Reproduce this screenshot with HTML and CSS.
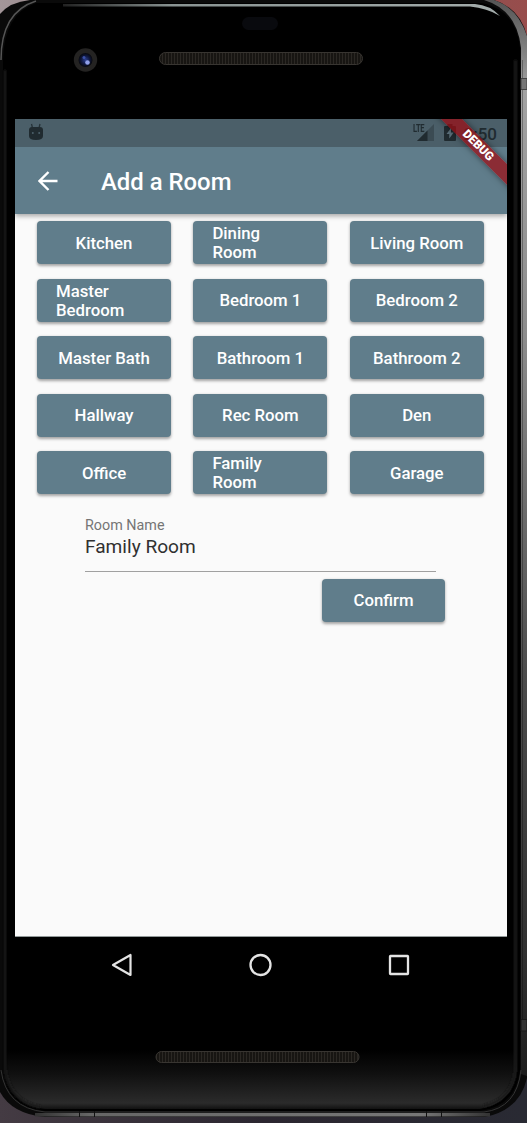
FILE: index.html
```html
<!DOCTYPE html>
<html lang="en">
<head>
<meta charset="utf-8">
<title>Add a Room</title>
<link rel="stylesheet" href="styles.css">
</head>
<body>
<div class="device">
  <svg class="shell" width="527" height="1123" viewBox="0 0 527 1123">
    <defs>
      <linearGradient id="desk" x1="0" y1="0" x2="1" y2="0"><stop offset="0" stop-color="#a39699"/><stop offset=".5" stop-color="#75585a"/><stop offset="1" stop-color="#984d4c"/></linearGradient>
      <linearGradient id="deskLow" x1="0" y1="0" x2="1" y2="0"><stop offset="0" stop-color="#443b43"/><stop offset=".5" stop-color="#2b2630"/><stop offset="1" stop-color="#292a33"/></linearGradient>
      <linearGradient id="chin" x1="0" y1="0" x2="0" y2="1"><stop offset="0" stop-color="#000"/><stop offset=".4" stop-color="#101010"/><stop offset=".9" stop-color="#2b2b2b"/><stop offset="1" stop-color="#121212"/></linearGradient>
      <linearGradient id="side" gradientUnits="userSpaceOnUse" x1="0" y1="0" x2="0" y2="1123"><stop offset="0" stop-color="#555"/><stop offset=".08" stop-color="#a2a2a2"/><stop offset=".3" stop-color="#8c8c8c"/><stop offset=".6" stop-color="#4c4c4c"/><stop offset=".85" stop-color="#303030"/><stop offset="1" stop-color="#151515"/></linearGradient>
      <linearGradient id="shine" x1="0" y1="0" x2="1" y2="0"><stop offset="0" stop-color="#222"/><stop offset=".25" stop-color="#8a9493"/><stop offset="1" stop-color="#a3acab"/></linearGradient>
      <linearGradient id="base" gradientUnits="userSpaceOnUse" x1="35" y1="0" x2="490" y2="0"><stop offset="0" stop-color="#333"/><stop offset=".12" stop-color="#666"/><stop offset=".85" stop-color="#777"/><stop offset="1" stop-color="#333"/></linearGradient>
      <radialGradient id="lens"><stop offset="0" stop-color="#2c3f91"/><stop offset=".6" stop-color="#10183d"/><stop offset="1" stop-color="#07080c"/></radialGradient>
      <pattern id="mesh" width="3" height="2" patternUnits="userSpaceOnUse"><rect width="3" height="2" fill="#171512"/><rect width="1" height="2" fill="#2b2824"/></pattern>
      <filter id="soft" x="-5%" y="-5%" width="110%" height="110%"><feGaussianBlur stdDeviation="1.200"/></filter>
    </defs>
    <rect width="527" height="200" fill="url(#desk)"/>
    <rect y="960" width="527" height="163" fill="url(#deskLow)"/>
    <path d="M0 14Q10 2 30 0H494Q520 8 527 36V1078Q520 1110 485 1117H45Q12 1114 0 1092Z" fill="#0a0a0a"/>
    <path d="M484 0H494Q518 8 527 36V1076L521 1074V48Q517 10 484 0Z" fill="url(#side)"/>
    <path d="M522.500 60V1030" stroke="#000" stroke-opacity=".3"/>
    <path d="M1 60Q1 12 36 1" fill="none" stroke="#555" stroke-width="1.500"/>
    <path d="M1 1070Q6 1108 45 1112H484Q517 1108 521 1070" fill="none" stroke="#333" stroke-width="1"/>
    <path d="M3 60Q4 14 36 3H482Q516 10 520 48V1070Q516 1106 480 1111H45Q7 1107 3 1070Z" fill="#000"/>
    <path d="M6 1050H517V1070Q513 1103 480 1109H45Q10 1105 6 1070Z" fill="url(#chin)"/>
    <path d="M5 70V1070Q10 1102 40 1107M515.500 60V1070Q512 1100 484 1106" fill="none" stroke="#1a1a1a" stroke-width="3" filter="url(#soft)"/>
    <path d="M63 4H475Q490 5 500 16Q487 8 470 6.500H63Z" fill="url(#shine)"/>
    <path d="M35 1114.800H490" stroke="url(#base)" stroke-width="3.500"/>
    <path d="M79.500 1111v6M94.500 1111v6M426.500 1111v6M441.500 1111v6" stroke="#111"/>
    <path d="M521 78.500H527V89.500H521Z" fill="#777" stroke="#444"/>
    <path d="M521 1019.500H527V1031H521Z" fill="#333" stroke="#181818"/>
    <rect x="242" y="17" width="36" height="13" rx="6.500" fill="#090a0e"/>
    <circle cx="85.500" cy="60" r="11.700" fill="#242322"/>
    <circle cx="85.500" cy="60" r="7" fill="url(#lens)"/>
    <circle cx="87.500" cy="62.500" r="2.300" fill="#91a0ea"/><circle cx="84" cy="57.500" r="1.500" fill="#3b51a8"/>
    <g fill="url(#mesh)" stroke="#383531"><rect x="159.500" y="52.500" width="203" height="12" rx="6"/><rect x="156" y="1051.500" width="203" height="11" rx="5.500"/></g>
  </svg>

  <main class="screen">
    <header class="top">
      <div class="status">
        <svg class="droid" width="16" height="18" viewBox="0 0 16 18"><path d="M3.500 1l1 4M12 1l-1 4" stroke="#263238" stroke-width="1.300"/><path d="M1 7Q1 4 4 4H12Q15 4 15 7V13Q15 17 8 17Q1 17 1 13Z" fill="#202b30"/><circle cx="4.800" cy="10" r="1" fill="#4c616b"/><circle cx="11.200" cy="10" r="1" fill="#4c616b"/></svg>
        <div class="signals">
          <span class="lte">LTE</span>
          <svg class="bars" width="17" height="17" viewBox="0 0 17 17"><path d="M17 0V17H0Z" fill="#3b4b53"/><path d="M10.500 6.500V17H0Z" fill="#202b30"/></svg>
          <svg class="battery" width="12" height="17" viewBox="0 0 12 17"><path d="M1 2H3.500V0H8.500V2H11Q12 2 12 3V16Q12 17 11 17H1Q0 17 0 16V3Q0 2 1 2Z" fill="#202b30"/><path d="M7 4L2.500 10H5.300V14.500L9.700 8.500H7Z" fill="#5b707b"/></svg>
          <span class="time">2:50</span>
        </div>
      </div>
      <div class="appbar">
        <svg width="20" height="20" viewBox="0 0 20 20"><path d="M10.500 1L1.500 10L10.500 19M1.500 10H19.500" fill="none" stroke="#fff" stroke-width="2.400"/></svg>
        <h1>Add a Room</h1>
      </div>
    </header>

    <section class="rooms">
      <button><span>Kitchen</span></button><button><span class="wrap">Dining<br>Room</span></button><button><span>Living Room</span></button>
      <button><span class="wrap">Master<br>Bedroom</span></button><button><span>Bedroom 1</span></button><button><span>Bedroom 2</span></button>
      <button><span>Master Bath</span></button><button><span>Bathroom 1</span></button><button><span>Bathroom 2</span></button>
      <button><span>Hallway</span></button><button><span>Rec Room</span></button><button><span>Den</span></button>
      <button><span>Office</span></button><button><span class="wrap">Family<br>Room</span></button><button><span>Garage</span></button>
    </section>

    <section class="form">
      <div class="field"><div class="label">Room Name</div><div class="value">Family Room</div></div>
      <button class="confirm"><span>Confirm</span></button>
    </section>

    <div class="ribbon"><span>DEBUG</span></div>
  </main>

  <nav class="nav">
    <svg width="22" height="26" viewBox="0 0 22 26"><path d="M19.500 3V23L2 13Z" fill="none" stroke="#e4e4e4" stroke-width="2.200" stroke-linejoin="round"/></svg>
    <svg width="24" height="26" viewBox="0 0 24 26"><circle cx="11.500" cy="13" r="10" fill="none" stroke="#e4e4e4" stroke-width="2.300"/></svg>
    <svg width="22" height="26" viewBox="0 0 22 26"><rect x="2" y="4" width="18" height="18" rx=".5" fill="none" stroke="#e4e4e4" stroke-width="2.300"/></svg>
  </nav>
</div>
</body>
</html>
```
FILE: styles.css
```css
* { box-sizing: border-box; }
body { margin: 0; background: #000; font-family: Roboto, sans-serif; }
.device { position: relative; width: 527px; height: 1123px; padding: 119px 20px 0 15px; overflow: hidden; }
.shell { position: absolute; left: 0; top: 0; }
.screen { position: relative; height: 818px; background: #fafafa; border-bottom: 1px solid #929999; overflow: hidden; }
.top { position: relative; height: 95px; background: #607d8b; box-shadow: 0 2px 5px rgba(0,0,0,.35); }
.status { height: 28px; padding: 0 10px 0 13px; background: #4b5f69; display: flex; justify-content: space-between; align-items: flex-start; color: #202b30; }
.droid { margin-top: 4px; }
.signals { display: flex; align-items: flex-start; padding-top: 5px; }
.lte { font-size: 11px; line-height: 10px; font-weight: 700; width: 4px; letter-spacing: -.4px; transform: scaleX(.68); transform-origin: left; white-space: nowrap; }
.bars { margin-left: 0; }
.battery { margin-left: 10px; }
.time { font-size: 17px; line-height: 20px; font-weight: 500; width: 34px; margin-left: 7px; text-align: right; }
.appbar { height: 67px; display: flex; align-items: center; padding-left: 23px; gap: 43px; }
h1 { margin: 2px 0 0; color: #fff; font-size: 23.9px; line-height: 28px; font-weight: 500; }
.rooms { display: grid; grid-template-columns: repeat(3, 134px); grid-auto-rows: 43px; gap: 14.5px 22.4px; padding: 7.4px 22px 0; }
button { display: flex; align-items: center; justify-content: center; margin: 0; padding: .6px 0 0; border: 0; border-radius: 4px; background: #607d8b; color: #fff; font: 500 16.75px/19px Roboto, sans-serif; box-shadow: 0 1.5px 3px rgba(0,0,0,.35); }
.wrap { width: 96px; text-align: left; }
.form { padding: 22px 62px 0 70px; display: flex; flex-direction: column; }
.field { width: 351px; height: 55.5px; padding-top: .8px; border-bottom: 1px solid #a0a0a0; }
.label { color: #757575; font-size: 14.35px; line-height: 17px; }
.value { margin-top: 1px; color: #303030; font-size: 19.1px; line-height: 24px; }
.confirm { align-self: flex-end; width: 123px; height: 43px; margin-top: 7px; }
.ribbon { position: absolute; left: 398px; top: 19px; width: 130px; height: 15px; background: rgba(155,12,20,.72); transform: rotate(45deg); display: flex; justify-content: center; align-items: center; box-shadow: 0 0 6px rgba(0,0,0,.5); }
.ribbon span { color: #fff; font-weight: 900; font-size: 12px; line-height: 15px; }
.nav { position: relative; height: 56px; display: flex; align-items: center; justify-content: space-between; padding: 0 97px 0 96px; }
```
